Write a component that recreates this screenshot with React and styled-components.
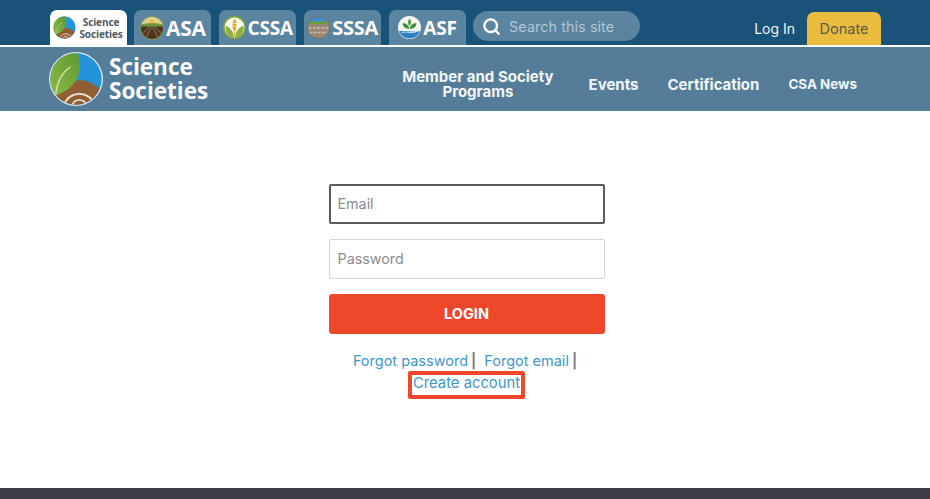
import React from 'react'
import styled, { createGlobalStyle } from 'styled-components'
import { Search } from 'lucide-react'

const Global = createGlobalStyle`
  html, body { margin: 0; padding: 0; background: #fff; }
  body { font-family: Inter, "Liberation Sans", sans-serif; }
`

const Page = styled.div`
  width: 930px;
  height: 499px;
  display: flex;
  flex-direction: column;
  overflow: hidden;
`

const TopBar = styled.div`
  height: 45px;
  flex: none;
  background: #1a5379;
  display: flex;
  align-items: flex-end;
  padding-left: 49.5px;
  box-sizing: border-box;
`

const Tabs = styled.div`
  display: flex;
  gap: 7.9px;
`

const Tab = styled.div`
  width: 77px;
  height: 35px;
  box-sizing: border-box;
  border-radius: 7px 7px 0 0;
  background: ${({ $active }) => ($active ? '#fff' : '#5a84a0')};
  display: flex;
  align-items: center;
  justify-content: center;
  gap: ${({ $active }) => ($active ? '3px' : '2px')};
`

const TabName = styled.span`
  font-family: "Open Sans", sans-serif;
  font-weight: 700;
  font-size: ${({ $size }) => $size || 20}px;
  letter-spacing: -0.2px;
  color: #fff;
`

const TabBrand = styled.span`
  font-family: "Open Sans", sans-serif;
  font-weight: 700;
  font-size: 10px;
  line-height: 12px;
  letter-spacing: -0.1px;
  color: #4e5a63;
  text-align: center;
`

const SearchBox = styled.div`
  width: 167px;
  height: 30px;
  margin: 0 0 4px 7px;
  border-radius: 15px;
  background: #5a84a0;
  display: flex;
  align-items: center;
  gap: 8px;
  padding-left: 9px;
  box-sizing: border-box;
  color: #fff;
`

const SearchText = styled.span`
  font-size: 14.3px;
  color: #b4c6d3;
  letter-spacing: 0.1px;
`

const TopRight = styled.div`
  margin-left: auto;
  margin-right: 49px;
  display: flex;
  align-items: flex-end;
  gap: 12px;
`

const LogIn = styled.a`
  font-size: 14px;
  color: #eef3f6;
  padding-bottom: 8px;
`

const Donate = styled.a`
  width: 74px;
  height: 33px;
  border-radius: 7px 7px 0 0;
  background: #e9bb3f;
  color: #5f5a45;
  font-size: 14.5px;
  display: flex;
  align-items: center;
  justify-content: center;
`

const NavBar = styled.div`
  height: 64px;
  flex: none;
  margin-top: 2px;
  background: #557d99;
  display: flex;
  align-items: center;
  padding-left: 49px;
  box-sizing: border-box;
`

const Brand = styled.div`
  display: flex;
  align-items: center;
  gap: 6px;
`

const BrandName = styled.div`
  font-family: "Open Sans", sans-serif;
  font-weight: 700;
  font-size: 22.5px;
  line-height: 24px;
  color: #fff;
`

const Nav = styled.nav`
  margin-left: 194px;
  padding-top: 10px;
  display: flex;
  align-items: center;
  gap: 29px;
`

const NavLink = styled.a`
  color: #f2f5f7;
  font-weight: 700;
  font-size: ${({ $small }) => ($small ? '13.4px' : '15px')};
  line-height: 15px;
  text-align: center;
  margin-right: ${({ $wide }) => ($wide ? '6px' : '0')};
`

const Main = styled.main`
  flex: 1;
  display: flex;
  flex-direction: column;
  align-items: center;
  padding: 72.5px 0 0 3px;
  box-sizing: border-box;
`

const Form = styled.div`
  width: 276px;
  display: flex;
  flex-direction: column;
  gap: 14.5px;
`

const Field = styled.div`
  height: 40.5px;
  box-sizing: border-box;
  border-radius: 2px;
  border: ${({ $focus }) => ($focus ? '2px solid #5b5b5f' : '1px solid #d4d4d6')};
  display: flex;
  align-items: center;
  padding-left: ${({ $focus }) => ($focus ? '7px' : '8px')};
  font-size: 14.3px;
  color: #8b8c91;
`

const LoginButton = styled.button`
  height: 40.5px;
  border: 0;
  border-radius: 3px;
  background: #ef4729;
  color: #fff;
  font-family: inherit;
  font-weight: 700;
  font-size: 14.5px;
`

const Links = styled.div`
  margin-top: 17px;
  width: 276px;
  display: flex;
  flex-direction: column;
  align-items: center;
  font-size: 14.5px;
  line-height: 20px;
`

const LinkRow = styled.div`
  display: flex;
  gap: 3px;
  padding-right: 3px;
`

const Link = styled.a`
  color: #3f97cd;
  margin-left: ${({ $spaced }) => ($spaced ? '5px' : '0')};
`

const Sep = styled.span`
  color: #77777c;
  font-weight: 600;
`

const Highlight = styled.div`
  border: 4px solid #ef4729;
  border-radius: 2px;
  padding: 0 1px;
  height: 28px;
  box-sizing: border-box;
  font-size: 14.8px;
  line-height: 16px;
`

const Footer = styled.div`
  height: 11px;
  flex: none;
  background: #3f3c46;
`

const SocietiesMark = ({ size, id }) => (
  <svg width={size} height={size} viewBox="0 0 40 40">
    <defs>
      <clipPath id={id}><circle cx="20" cy="20" r="19" /></clipPath>
      <linearGradient id={`${id}-leaf`} x1="0" y1="1" x2="1" y2="0">
        <stop offset="0" stopColor="#8fb84a" />
        <stop offset="1" stopColor="#5d9a2c" />
      </linearGradient>
    </defs>
    <circle cx="20" cy="20" r="20" fill="#dfe7ec" />
    <g clipPath={`url(#${id})`}>
      <rect width="40" height="40" fill="#2393dc" />
      <path d="M4 33 C10 26 16 21 23 21 C30 21 36 25 40 30 V40 H0 Z" fill="#8f5e35" />
      <path d="M11 40 C14 28 31 28 34 40 M17 40 C19 34 26 34 28 40" stroke="#eadfce" strokeWidth="1.4" fill="none" />
      <path d="M21 0 C24 8 24 18 17 25 C13 29 8 31 4 33 L0 33 V0 Z" fill={`url(#${id}-leaf)`} />
      <path d="M5 31 C6 22 10 15 16 11" stroke="#d4e6ae" strokeWidth="0.9" fill="none" />
    </g>
  </svg>
)

const AsaMark = () => (
  <svg width="24" height="24" viewBox="0 0 25 25">
    <defs><clipPath id="asa"><circle cx="12.5" cy="12.5" r="11.5" /></clipPath></defs>
    <circle cx="12.5" cy="12.5" r="12.5" fill="#7d9a5a" />
    <g clipPath="url(#asa)">
      <rect width="25" height="10" fill="#d9d58f" />
      <circle cx="12.5" cy="8" r="3.5" fill="#f0b93a" />
      <path d="M0 9 C8 7 17 7 25 9 V12 H0 Z" fill="#6f9440" />
      <rect y="11" width="25" height="14" fill="#4f3424" />
      <path d="M12 11 L5 25 M13 11 L20 25 M10 11 L0 21 M15 11 L25 21" stroke="#7c6a3a" strokeWidth="1.2" />
    </g>
  </svg>
)

const CssaMark = () => (
  <svg width="23" height="23" viewBox="0 0 25 25">
    <circle cx="12.5" cy="12.5" r="12.5" fill="#7ea33d" />
    <circle cx="12.5" cy="12.5" r="10.8" fill="#f8f8ec" />
    <path d="M2.5 11 C8 12 11.5 17 12 24 C6 23 2 18 2.5 11 Z" fill="#8cb045" />
    <path d="M22.5 11 C17 12 13.5 17 13 24 C19 23 23 18 22.5 11 Z" fill="#8cb045" />
    <path d="M12.5 3 C15.5 6 15.5 13 12.5 17 C9.5 13 9.5 6 12.5 3 Z" fill="#dca32f" />
    <path d="M10 8 H15 M10 11 H15" stroke="#f8f8ec" strokeWidth="0.8" />
    <path d="M12.5 15 V22" stroke="#dca32f" strokeWidth="1" />
  </svg>
)

const SssaMark = () => (
  <svg width="23" height="23" viewBox="0 0 25 25">
    <defs><clipPath id="sssa"><circle cx="12.5" cy="12.5" r="11.5" /></clipPath></defs>
    <circle cx="12.5" cy="12.5" r="12.5" fill="#77736d" />
    <g clipPath="url(#sssa)">
      <rect width="25" height="7" fill="#3f8fcf" />
      <rect y="6" width="25" height="3" fill="#6c9e3c" />
      <rect y="9" width="25" height="16" fill="#9c8878" />
      <path d="M2 13 H23 M3 18 H22" stroke="#c9bdb0" strokeWidth="1.6" strokeDasharray="3 1.5" />
    </g>
  </svg>
)

const AsfMark = () => (
  <svg width="23" height="23" viewBox="0 0 25 25">
    <defs><clipPath id="asf"><circle cx="12.5" cy="12.5" r="12" /></clipPath></defs>
    <circle cx="12.5" cy="12.5" r="12.5" fill="#f3f6f2" />
    <g clipPath="url(#asf)">
      <path d="M0 17 C8 15 17 19 25 16 V25 H0 Z" fill="#2f7fc1" />
      <path d="M4 18 C9 16 15 20 20 17" stroke="#d7e9f5" strokeWidth="1" fill="none" />
    </g>
    <path d="M12 14 C7 14 5 11 5 8 C9 8 12 10 12 14 Z" fill="#3f8f3a" />
    <path d="M13 14 C18 14 20 11 20 8 C16 8 13 10 13 14 Z" fill="#3f8f3a" />
    <path d="M12.5 11 C10 8 10.5 5 12.5 3 C14.5 5 15 8 12.5 11 Z" fill="#4f9f42" />
  </svg>
)

export default function App() {
  return (
    <Page>
      <Global />
      <TopBar>
        <Tabs>
          <Tab $active>
            <SocietiesMark size={23} id="tabmark" />
            <TabBrand>Science<br />Societies</TabBrand>
          </Tab>
          <Tab><AsaMark /><TabName $size={21}>ASA</TabName></Tab>
          <Tab><CssaMark /><TabName $size={19}>CSSA</TabName></Tab>
          <Tab><SssaMark /><TabName>SSSA</TabName></Tab>
          <Tab><AsfMark /><TabName $size={19}>ASF</TabName></Tab>
        </Tabs>
        <SearchBox>
          <Search size={19} strokeWidth={3} />
          <SearchText>Search this site</SearchText>
        </SearchBox>
        <TopRight>
          <LogIn>Log In</LogIn>
          <Donate>Donate</Donate>
        </TopRight>
      </TopBar>
      <NavBar>
        <Brand>
          <SocietiesMark size={54} id="navmark" />
          <BrandName>Science<br />Societies</BrandName>
        </Brand>
        <Nav>
          <NavLink $wide>Member and Society<br />Programs</NavLink>
          <NavLink>Events</NavLink>
          <NavLink>Certification</NavLink>
          <NavLink $small>CSA News</NavLink>
        </Nav>
      </NavBar>
      <Main>
        <Form>
          <Field $focus>Email</Field>
          <Field>Password</Field>
          <LoginButton>LOGIN</LoginButton>
        </Form>
        <Links>
          <LinkRow>
            <Link>Forgot password</Link>
            <Sep>|</Sep>
            <Link $spaced>Forgot email</Link>
            <Sep>|</Sep>
          </LinkRow>
          <Highlight><Link>Create account</Link></Highlight>
        </Links>
      </Main>
      <Footer />
    </Page>
  )
}
